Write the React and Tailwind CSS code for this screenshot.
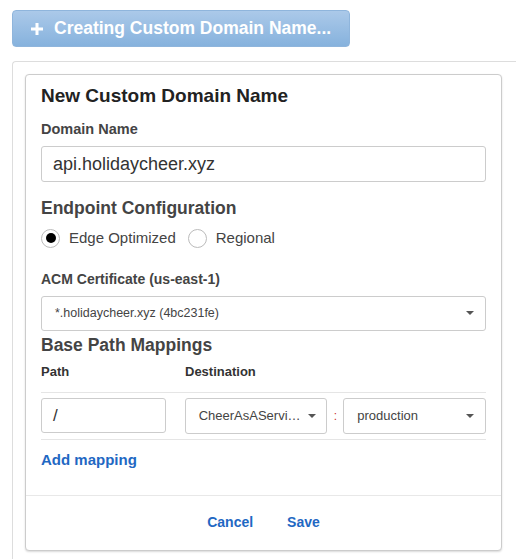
import React from 'react';

const Caret = () => (
  <span className="ml-auto w-0 h-0 border-l-[4px] border-r-[4px] border-t-[4px] border-l-transparent border-r-transparent border-t-[#555]" />
);

const Radio = ({ checked, label }) => (
  <label className="flex items-center">
    <span className="w-[19px] h-[19px] rounded-full border border-[#bbb] bg-white flex items-center justify-center">
      {checked && <span className="w-[10px] h-[10px] rounded-full bg-black" />}
    </span>
    <span className="ml-[9px] text-[15px] text-[#444]">{label}</span>
  </label>
);

const App = () => {
  return (
    <div
      className="w-[516px] h-[559px] overflow-hidden bg-white"
      style={{ fontFamily: '"Liberation Sans", Arial, sans-serif' }}
    >
      <div className="pt-[10px] pl-[12px]">
        <button className="w-[338px] h-[37px] rounded-[4px] border border-[#8fb5dc] bg-gradient-to-b from-[#abc9e9] to-[#86b2dd] flex items-center pl-[17px] text-white font-bold text-[17.5px]">
          <svg width="14" height="14" viewBox="0 0 14 14" className="mr-[10px]">
            <path d="M7 1v12M1 7h12" stroke="white" strokeWidth="3" />
          </svg>
          Creating Custom Domain Name...
        </button>
      </div>

      <div className="ml-[12px] mt-[14px] w-[520px] h-[520px] border-l border-t border-[#ddd] rounded-tl-[4px] pl-[12px] pt-[12px]">
        <div className="w-[477px] border border-[#ccc] rounded-[4px] shadow-[0_1px_2px_rgba(0,0,0,0.15)] bg-white">
          <div className="px-[15px] pt-[10px] pb-[10px]">
            <h2 className="text-[19px] font-bold text-[#222] leading-[22px]">New Custom Domain Name</h2>

            <div className="mt-[13px] text-[14.5px] font-bold text-[#444] leading-[18px]">Domain Name</div>
            <div className="mt-[8px] h-[36px] border border-[#ccc] rounded-[3px] flex items-center pl-[11px] text-[18px] text-[#333]">
              api.holidaycheer.xyz
            </div>

            <h3 className="mt-[15px] text-[17.5px] font-bold text-[#444] leading-[22px]">Endpoint Configuration</h3>
            <div className="mt-[8px] flex items-center gap-[12px]">
              <Radio checked label="Edge Optimized" />
              <Radio label="Regional" />
            </div>

            <div className="mt-[20px] text-[14px] font-bold text-[#444] leading-[18px]">ACM Certificate (us-east-1)</div>
            <div className="mt-[8px] h-[35px] border border-[#ccc] rounded-[3px] flex items-center pl-[13px] pr-[11px] text-[12.5px] text-[#444]">
              *.holidaycheer.xyz (4bc231fe)
              <Caret />
            </div>

            <h3 className="mt-[3px] text-[17.5px] font-bold text-[#444] leading-[22px]">Base Path Mappings</h3>
            <div className="mt-[8px] flex text-[13px] font-bold text-[#333] leading-[16px] pb-[12px] border-b border-[#e5e5e5]">
              <span className="w-[144px]">Path</span>
              <span>Destination</span>
            </div>
            <div className="flex items-center py-[5px] border-b border-[#e5e5e5]">
              <div className="w-[125px] h-[35px] border border-[#ccc] rounded-[3px] flex items-center pl-[11px] text-[17px] text-[#333]">
                /
              </div>
              <div className="ml-[19px] w-[143px] h-[36px] border border-[#ccc] rounded-[3px] flex items-center pl-[13px] pr-[10px] text-[13px] text-[#444]">
                <span className="whitespace-nowrap">CheerAsAServi…</span>
                <Caret />
              </div>
              <span className="w-[16px] text-center text-[12px] text-[#c33]">:</span>
              <div className="w-[143px] h-[36px] border border-[#ccc] rounded-[3px] flex items-center pl-[13px] pr-[11px] text-[13px] text-[#444]">
                production
                <Caret />
              </div>
            </div>
            <div className="mt-[11px] text-[15px] font-bold text-[#1f68c3] leading-[18px]">Add mapping</div>
          </div>
          <div className="mt-[16px] border-t border-[#e8e8e8] h-[55px] pb-[1px] flex items-center justify-center gap-[34px] text-[14px] font-bold text-[#1f68c3]">
            <span>Cancel</span>
            <span>Save</span>
          </div>
        </div>
      </div>
    </div>
  );
};

export default App;
